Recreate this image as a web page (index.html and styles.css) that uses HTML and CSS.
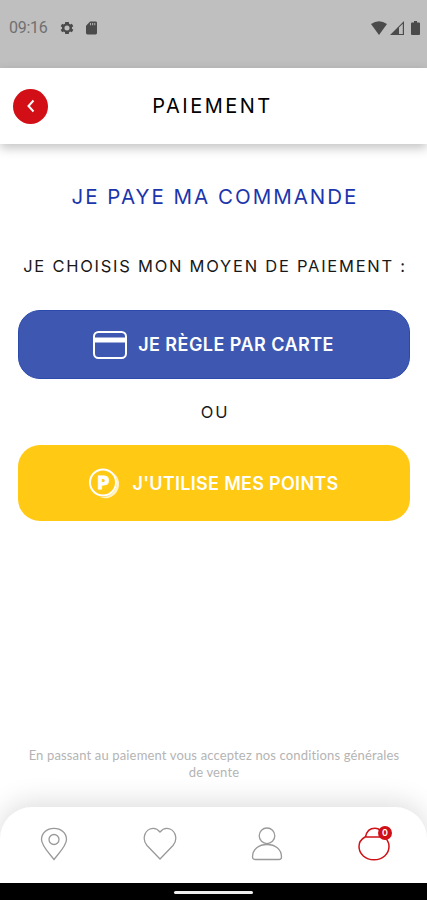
FILE: index.html
```html
<!DOCTYPE html>
<html lang="fr">
<head>
  <meta charset="UTF-8" />
  <meta name="viewport" content="width=device-width, initial-scale=1.0" />
  <title>Paiement</title>
  <link rel="stylesheet" href="styles.css">
</head>
<body>
  <div class="screen">
    <div class="status-bar">
      <span class="time">09:16</span>
      <svg class="gear" width="16" height="16" viewBox="0 0 24 24"><path fill-rule="evenodd" d="M19.4 13a7.500 7.500 0 0 0 0-2l2.100-1.600-2.200-3.700-2.500 1a7.500 7.500 0 0 0-1.700-1L14.700 3H9.300l-.4 2.700a7.500 7.500 0 0 0-1.700 1l-2.500-1-2.200 3.700L4.600 11a7.500 7.500 0 0 0 0 2l-2.100 1.600 2.200 3.700 2.500-1a7.500 7.500 0 0 0 1.700 1l.4 2.700h5.400l.4-2.700a7.500 7.500 0 0 0 1.700-1l2.500 1 2.200-3.700zM12 15.800a3.800 3.800 0 1 1 0-7.600 3.800 3.800 0 0 1 0 7.600z"/></svg>
      <svg class="sd" width="11" height="14" viewBox="0 0 12 14"><path d="M4.500 0H10.500Q12 0 12 1.500V12.500Q12 14 10.500 14H1.500Q0 14 0 12.500V4.500z"/><path class="slots" d="M5 1.500v2.500M7.300 1.500v2.500M9.600 1.500v2.500"/></svg>
      <div class="signals">
        <svg width="16" height="14" viewBox="0 0 16 14"><path d="M0 3Q8-2.500 16 3L8 14z"/></svg>
        <svg width="14" height="14" viewBox="0 0 14 14"><path d="M0 14L14 0v14zM9 6.500V13h3.800V2.700z" fill-rule="evenodd"/></svg>
        <svg class="battery" width="9" height="14" viewBox="0 0 9 14"><path d="M3 0h3v1.500h2q1 0 1 1V13q0 1-1 1H1q-1 0-1-1V2.500q0-1 1-1h2z"/></svg>
      </div>
    </div>

    <header class="header">
      <button class="back" aria-label="Retour">
        <svg width="8" height="14" viewBox="0 0 8 14"><path d="M6.500 1.500L1.500 7l5 5.500"/></svg>
      </button>
      <h1>PAIEMENT</h1>
    </header>

    <main class="content">
      <h2>JE PAYE MA COMMANDE</h2>
      <p class="subtitle">JE CHOISIS MON MOYEN DE PAIEMENT :</p>

      <button class="pay card">
        <svg width="34" height="28" viewBox="0 0 34 28"><rect x="1" y="1" width="32" height="26" rx="4.500"/><path class="stripe" d="M1 9h32"/></svg>
        <span>JE RÈGLE PAR CARTE</span>
      </button>
      <p class="or">OU</p>
      <button class="pay points">
        <svg width="30" height="31" viewBox="0 0 30 31"><circle cx="14" cy="14.500" r="13"/><path class="edge" d="M24.500 5A14 14 0 0 1 10 28.800C22 32 34 17 24.500 5z"/><text x="14.500" y="21">P</text></svg>
        <span>J'UTILISE MES POINTS</span>
      </button>

      <p class="terms">En passant au paiement vous acceptez nos conditions générales<br>de vente</p>
    </main>

    <nav class="tabs">
      <a class="tab"><svg width="28" height="34" viewBox="0 0 28 34"><path d="M14 32.500C10 27 1.500 19 1.500 12.500C1.500 6 7 1.300 14 1.300S26.500 6 26.500 12.500C26.500 19 18 27 14 32.500z"/><circle cx="14" cy="12.500" r="5"/></svg></a>
      <a class="tab"><svg width="34" height="34" viewBox="0 0 34 34"><path d="M17 32L4 18.500C-.8 13 1 4.500 7 2C11 .5 14.500 2 17 5C19.500 2 23 .5 27 2C33 4.500 34.800 13 30 18.500z"/></svg></a>
      <a class="tab"><svg width="32" height="34" viewBox="0 0 32 34"><circle cx="16" cy="8.800" r="7.800"/><path d="M4 32.500Q1.500 32.500 1.500 30C1.500 22 8 17.500 16 17.500S30.500 22 30.500 30Q30.500 32.500 28 32.500z"/></svg></a>
      <a class="tab active">
        <svg width="32" height="34" viewBox="0 0 32 34"><path d="M7.500 10C8.500 4.500 11 1.200 17 1.200C22 1.200 24 4 25 10M7 10H26C29.500 12.500 31 15.500 31 19.500C31 27 24.500 32.800 16 32.800S1 27 1 19.500C1 15.500 3.500 12 7 10z"/></svg>
        <span class="count">0</span>
      </a>
    </nav>
    <div class="system-bar"><span class="handle"></span></div>
  </div>
</body>
</html>
```
FILE: styles.css
```css
* {
  box-sizing: border-box;
}

body {
  margin: 0;
  background: #fff;
  font-family: Inter, "Open Sans", sans-serif;
}

h1, h2, p {
  margin: 0;
  font-weight: 400;
  white-space: nowrap;
}

button {
  border: 0;
  padding: 0;
  font-family: inherit;
}

.screen {
  width: 427px;
  height: 900px;
  display: flex;
  flex-direction: column;
  overflow: hidden;
}

.status-bar {
  height: 68px;
  flex: none;
  display: flex;
  align-items: center;
  padding: 0 7px 13px 9px;
  background: #bfbfbf;
  color: #707070;
  fill: #4b4b4b;
}

.time {
  width: 50px;
  font: 16px Roboto, sans-serif;
  letter-spacing: -0.3px;
}

.sd {
  margin-left: 11px;
}

.slots {
  stroke: #bfbfbf;
  stroke-width: 1;
}

.signals {
  display: flex;
  gap: 3px;
  margin-left: auto;
}

.battery {
  margin-left: 4px;
}

.header {
  height: 76px;
  flex: none;
  display: grid;
  grid-template-columns: 35px 1fr 35px;
  align-items: center;
  padding: 0 14px 0 13px;
  background: #fff;
  box-shadow: 0 4px 10px rgba(0, 0, 0, 0.24);
}

.header h1 {
  text-align: center;
  font-size: 20px;
  letter-spacing: 2.5px;
  text-indent: -1px;
}

.back {
  display: flex;
  align-items: center;
  justify-content: center;
  width: 35px;
  height: 35px;
  border-radius: 50%;
  background: #d20f16;
}

.back path {
  fill: none;
  stroke: #fff;
  stroke-width: 2;
}

.content {
  flex: 1;
  display: flex;
  flex-direction: column;
  padding: 39px 17px 0 18px;
  text-align: center;
}

.content h2 {
  color: #1c35ac;
  font-size: 20.5px;
  line-height: 28px;
  letter-spacing: 2px;
  text-indent: 2px;
}

.subtitle {
  margin-top: 44px;
  color: #181818;
  font-size: 16.5px;
  line-height: 22px;
  letter-spacing: 1.75px;
  text-indent: 2px;
}

.pay {
  display: flex;
  align-items: center;
  justify-content: center;
  height: 69px;
  border-radius: 22px;
  color: #fff;
  font-size: 18px;
  font-weight: 600;
  white-space: nowrap;
}

.pay svg {
  fill: none;
  stroke: #fff;
  stroke-width: 2;
}

.card {
  margin-top: 33px;
  padding-right: 1px;
  gap: 11px;
  background: #3e58b2;
  border: 1px solid #2c4aac;
  letter-spacing: 0.45px;
}

.pay .stripe {
  stroke-width: 5;
}

.or {
  margin: 22px 0;
  color: #181818;
  font-size: 16.5px;
  line-height: 22px;
  letter-spacing: 1.8px;
  text-indent: 2px;
}

.points {
  height: 76px;
  gap: 13px;
  background: #ffc914;
  letter-spacing: 0.3px;
}

.points .edge {
  fill: #fff2c4;
  stroke: none;
}

.points text {
  fill: #fff;
  stroke: #fff;
  stroke-width: 0.8;
  font-size: 18px;
  font-weight: 800;
  text-anchor: middle;
}

.terms {
  margin-top: 226px;
  color: #b4b4b4;
  font-family: Lato, sans-serif;
  font-size: 13px;
  line-height: 17px;
  letter-spacing: 0.15px;
}

.tabs {
  height: 76px;
  flex: none;
  display: flex;
  align-items: center;
  justify-content: space-between;
  padding: 1px 37px 4px 40px;
  border-radius: 32px 32px 0 0;
  background: #fff;
  box-shadow: 0 -4px 28px rgba(0, 0, 0, 0.14);
}

.tab {
  position: relative;
  display: flex;
}

.tab svg {
  fill: none;
  stroke: #999;
  stroke-width: 1.3;
}

.tab.active svg {
  stroke: #cf1016;
  stroke-width: 1.5;
}

.count {
  position: absolute;
  top: -1px;
  right: -2px;
  width: 14px;
  height: 14px;
  border-radius: 50%;
  background: #cf1016;
  color: #fff;
  font-size: 9px;
  font-weight: 600;
  line-height: 14px;
  text-align: center;
}

.system-bar {
  height: 17px;
  flex: none;
  display: flex;
  align-items: center;
  justify-content: center;
  background: #000;
}

.handle {
  width: 79px;
  height: 3px;
  margin-top: 2px;
  border-radius: 2px;
  background: #eee;
}
```
